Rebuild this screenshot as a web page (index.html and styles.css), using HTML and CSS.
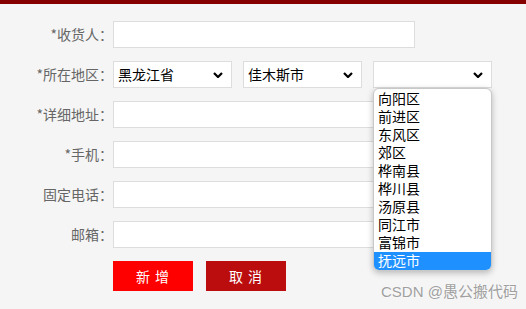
FILE: index.html
```html
<!DOCTYPE html>
<html lang="zh-CN">
<head>
    <meta charset="UTF-8">
    <title>收货地址</title>
    <link rel="stylesheet" href="styles.css">
</head>
<body>
    <div class="topbar"></div>
    <form class="address-form">
        <div class="row">
            <label class="label">*收货人：</label>
            <input class="field" type="text">
        </div>
        <div class="row">
            <label class="label">*所在地区：</label>
            <div class="picker">
                <div class="select-box">黑龙江省<svg class="chevron" viewBox="0 0 10 6"><path d="M1 1 L5 5 L9 1" /></svg></div>
                <div class="select-box">佳木斯市<svg class="chevron" viewBox="0 0 10 6"><path d="M1 1 L5 5 L9 1" /></svg></div>
                <div class="select-box open">
                    <svg class="chevron" viewBox="0 0 10 6"><path d="M1 1 L5 5 L9 1" /></svg>
                    <ul class="options">
                        <li>向阳区</li>
                        <li>前进区</li>
                        <li>东风区</li>
                        <li>郊区</li>
                        <li>桦南县</li>
                        <li>桦川县</li>
                        <li>汤原县</li>
                        <li>同江市</li>
                        <li>富锦市</li>
                        <li class="selected">抚远市</li>
                    </ul>
                </div>
            </div>
        </div>
        <div class="row">
            <label class="label">*详细地址：</label>
            <input class="field" type="text">
        </div>
        <div class="row">
            <label class="label">*手机：</label>
            <input class="field" type="text">
        </div>
        <div class="row">
            <label class="label">固定电话：</label>
            <input class="field" type="text">
        </div>
        <div class="row">
            <label class="label">邮箱：</label>
            <input class="field" type="text">
        </div>
        <div class="buttons">
            <button type="button" class="btn btn-add">新 增</button>
            <button type="button" class="btn btn-cancel">取 消</button>
        </div>
    </form>
    <div class="watermark">CSDN @愚公搬代码</div>
</body>
</html>
```

FILE: styles.css
```css
body {
    margin: 0;
    background-color: #f5f5f5;
    font-family: "Noto Sans CJK SC", "Liberation Sans", sans-serif;
    font-size: 14px;
    color: #666;
    height: 309px;
    overflow: hidden;
    position: relative;
}
.topbar {
    height: 4px;
    background-color: #850000;
}
.address-form {
    padding-top: 17px;
}
.row {
    display: flex;
    align-items: center;
    height: 27px;
    margin-bottom: 13px;
}
.label {
    width: 113px;
    text-align: right;
    line-height: 27px;
    margin-right: -7px;
}
.field {
    box-sizing: border-box;
    width: 302px;
    height: 27px;
    margin: 0 0 0 7px;
    border: 1px solid #ddd;
    background: #fff;
    padding: 0 4px;
    outline: none;
}
.picker {
    display: flex;
    gap: 11px;
    margin-left: 7px;
}
.select-box {
    position: relative;
    box-sizing: border-box;
    width: 119px;
    height: 27px;
    border: 1px solid #ddd;
    background: #fff;
    color: #000;
    line-height: 25px;
    padding-left: 4px;
}
.chevron {
    position: absolute;
    right: 8px;
    top: 10px;
    width: 10px;
    height: 6px;
    fill: none;
    stroke: #000;
    stroke-width: 2.2;
}
.options {
    position: absolute;
    left: -1px;
    top: 26px;
    width: 119px;
    margin: 0;
    padding: 1px 0 0;
    list-style: none;
    background: #fff;
    border: 1px solid #c8c8c8;
    border-radius: 6px;
    box-shadow: 0 2px 6px rgba(0, 0, 0, 0.25);
    overflow: hidden;
    box-sizing: border-box;
    z-index: 2;
    font-family: "Liberation Sans", "Noto Sans CJK SC", sans-serif;
}
.options li {
    height: 18px;
    line-height: 18px;
    padding-left: 4px;
    color: #000;
}
.options li.selected {
    background-color: #1e90ff;
    color: #fff;
}
.buttons {
    display: flex;
    gap: 13px;
    margin-left: 113px;
    margin-top: 3px;
}
.btn {
    width: 80px;
    height: 30px;
    border: none;
    color: #fff;
    font-family: "Noto Sans CJK SC", sans-serif;
    font-size: 14px;
    letter-spacing: 1px;
    cursor: pointer;
}
.btn-add {
    background-color: #ff0000;
}
.btn-cancel {
    background-color: #bb0d0d;
}
.watermark {
    position: absolute;
    left: 381px;
    top: 280px;
    color: #a0a0a0;
    font-family: "Liberation Sans", "Noto Sans CJK SC", sans-serif;
    font-size: 15px;
    text-shadow: 0 0 2px #fff;
}
```
